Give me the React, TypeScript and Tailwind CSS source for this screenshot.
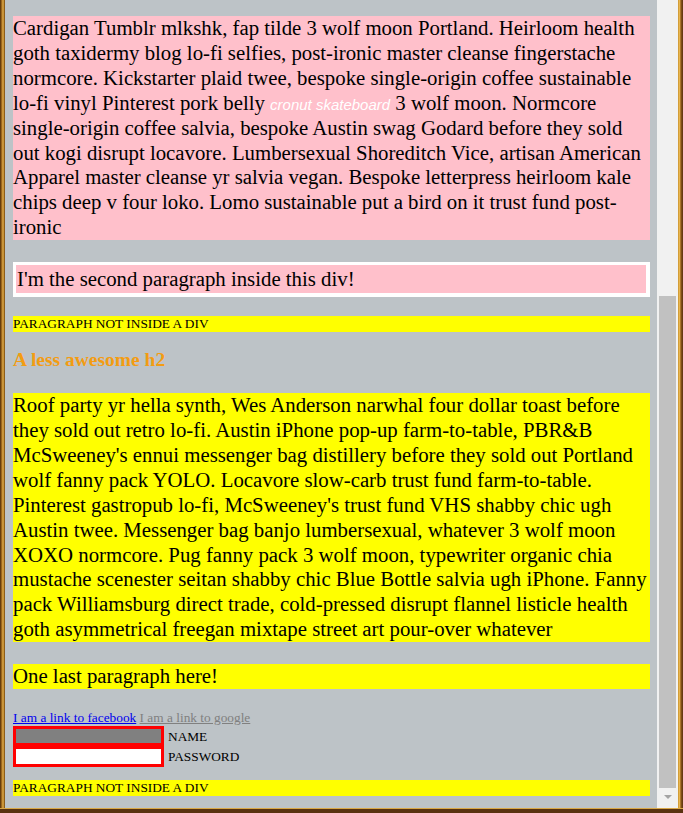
import React from "react";

const serif = "font-['Liberation_Serif','Times_New_Roman',serif]";

export default function App() {
  return (
    <div className={`w-[683px] h-[813px] flex flex-col overflow-hidden ${serif}`}>
      <div className="flex flex-1 min-h-0">
        <div className="w-[5px] bg-[linear-gradient(to_right,#4a2808,#a8701f_35%,#e0ad4c_60%,#b07a25_80%,#6a400f)]" />
        <div className="w-[652px] bg-[#bdc3c7] pt-[16px] pl-[8px] pr-[7px] text-black">
          <p className="bg-[#ffc0cb] text-[20.8px] leading-[24.9px]">
            Cardigan Tumblr mlkshk, fap tilde 3 wolf moon Portland. Heirloom health goth taxidermy blog lo-fi selfies, post-ironic master cleanse fingerstache normcore. Kickstarter plaid twee, bespoke single-origin coffee sustainable lo-fi vinyl Pinterest pork belly{" "}
            <em className="font-['Liberation_Sans',Arial,sans-serif] text-[15px] leading-none text-white">cronut skateboard</em>{" "}
            3 wolf moon. Normcore single-origin coffee salvia, bespoke Austin swag Godard before they sold out kogi disrupt locavore. Lumbersexual Shoreditch Vice, artisan American Apparel master cleanse yr salvia vegan. Bespoke letterpress heirloom kale chips deep v four loko. Lomo sustainable put a bird on it trust fund post-ironic
          </p>
          <div className="mt-[22px] border-[3px] border-white border-b-[4px] border-r-[4px]">
            <p className="bg-[#ffc0cb] text-[20.8px] leading-[24.9px] px-[1px] py-[1.5px]">
              I'm the second paragraph inside this div!
            </p>
          </div>
          <p className="mt-[19px] bg-[#ffff00] text-[13.33px] leading-[16px] uppercase">
            Paragraph not inside a div
          </p>
          <h2 className="mt-[17px] text-[19.5px] leading-[22px] font-bold text-[#f39c12]">
            A less awesome h2
          </h2>
          <p className="mt-[22px] bg-[#ffff00] text-[20.8px] leading-[24.9px]">
            Roof party yr hella synth, Wes Anderson narwhal four dollar toast before they sold out retro lo-fi. Austin iPhone pop-up farm-to-table, PBR&amp;B McSweeney's ennui messenger bag distillery before they sold out Portland wolf fanny pack YOLO. Locavore slow-carb trust fund farm-to-table. Pinterest gastropub lo-fi, McSweeney's trust fund VHS shabby chic ugh Austin twee. Messenger bag banjo lumbersexual, whatever 3 wolf moon XOXO normcore. Pug fanny pack 3 wolf moon, typewriter organic chia mustache scenester seitan shabby chic Blue Bottle salvia ugh iPhone. Fanny pack Williamsburg direct trade, cold-pressed disrupt flannel listicle health goth asymmetrical freegan mixtape street art pour-over whatever
          </p>
          <p className="mt-[22px] bg-[#ffff00] text-[20.8px] leading-[24.9px]">
            One last paragraph here!
          </p>
          <div className="mt-[21px] h-[16px] text-[13.33px] leading-[15px]">
            <a href="#" className="text-[#0000ee] underline">I am a link to facebook</a>{" "}
            <a href="#" className="text-[#808080] underline">I am a link to google</a>
          </div>
          <div className="flex flex-col text-[13.33px] leading-[15px]">
            <div className="flex items-center gap-[4px] h-[20px]">
              <div className="w-[151px] h-[20px] border-[3px] border-[#ff0000] bg-[#808080]" />
              <span>NAME</span>
            </div>
            <div className="flex items-center gap-[4px] h-[21px]">
              <div className="w-[151px] h-[21px] border-[3px] border-[#ff0000] bg-white" />
              <span>PASSWORD</span>
            </div>
          </div>
          <p className="mt-[13px] bg-[#ffff00] text-[13.33px] leading-[16px] uppercase">
            Paragraph not inside a div
          </p>
        </div>
        <div className="w-[21px] bg-[#f1f1f1] flex flex-col items-center">
          <div className="mt-[296px] w-[17px] h-[492px] bg-[#c1c1c1]" />
          <div className="mt-[7px] w-0 h-0 border-l-[4px] border-r-[4px] border-t-[4px] border-l-transparent border-r-transparent border-t-[#a3a3a3]" />
        </div>
        <div className="w-[5px] bg-[linear-gradient(to_right,#c8912d,#e8b650_30%,#8a5518_60%,#5a3210)]" />
      </div>
      <div className="h-[5px] flex flex-col">
        <div className="h-[1px] bg-[#d9a848]" />
        <div className="flex-1 bg-[#5a3210]" />
      </div>
    </div>
  );
}
